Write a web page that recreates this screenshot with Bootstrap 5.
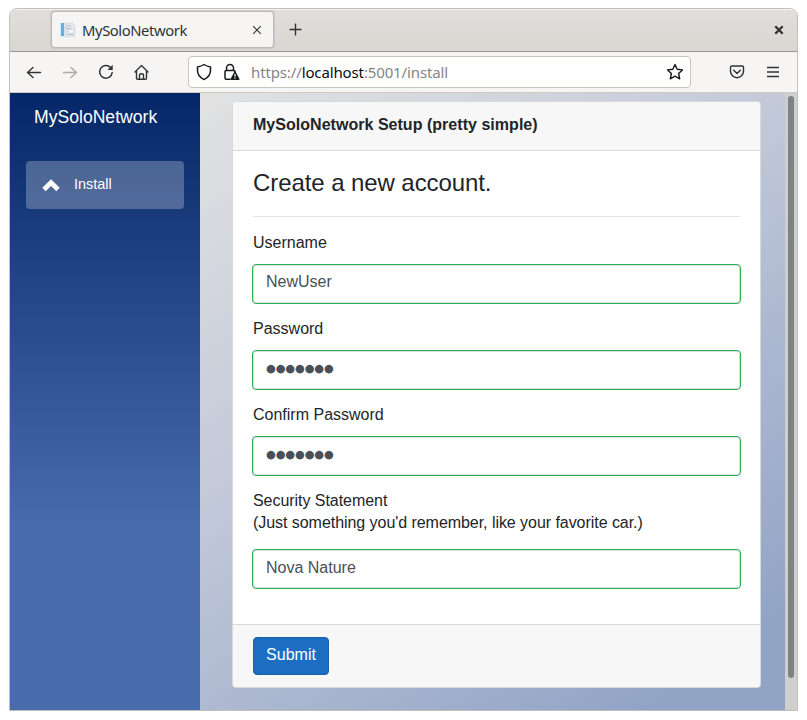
<!DOCTYPE html>
<html lang="en">
<head>
<meta charset="utf-8">
<title>MySoloNetwork</title>
<link href="https://cdn.jsdelivr.net/npm/bootstrap@5.3.0/dist/css/bootstrap.min.css" rel="stylesheet">
<style>
body{font-family:"Liberation Sans",Arial,sans-serif;color:#212529;background:#fff;height:720px;overflow:hidden;padding:8px 9px 9px}
svg{display:block;flex:none}
.win{width:789px;height:703px;border:1px solid #c2c0bd;border-radius:8px 8px 0 0;overflow:hidden}
.chrome-font{font-family:"Noto Sans",sans-serif}
.titlebar{height:43px;background:linear-gradient(#e1dedb,#dad6d2);border-bottom:1px solid #9a9590;box-shadow:inset 0 1px #f6f4f3;padding:3px 13px 4px 41px}
.tab{width:223px;height:37px;background:#f6f5f4;border:1px solid #bcb9bc;border-radius:4px;box-shadow:0 0 2px #a9a5a5;padding:0 11px 0 8px;font-size:14.8px;letter-spacing:-.42px;color:#2e3436}
.tab-name{padding:2px 0 0 6px}
.newtab{margin-left:15px}
.toolbar{height:41px;background:#f6f5f4;border-bottom:1px solid #d0c8c1;padding:0 18px 0 15px;color:#2e3436}
.home{margin-left:18px}
.urlbar{width:503px;height:32px;background:#fff;border:1px solid #cac5c0;border-radius:4px;padding:0 6px;margin-left:37px;font-size:15px;letter-spacing:-.13px;color:#858585}
.address{margin-left:9px;padding-top:1px}
.lock{margin-left:9px}
.menu-icon{margin-left:22px}
.urlbar b{font-weight:400;color:#0c0c0d}
.viewport{height:617px}
.sidebar{width:190px;background:linear-gradient(#052767,#486bab 70%)}
.brand{height:48px;padding:1px 0 0 24px;font-size:17.6px;color:#fff}
.side-link{margin:20px 16px 0;height:48px;border-radius:4px;background:rgba(255,255,255,.25);color:#fff;font-size:14.4px;padding:0 16px;gap:14px}
.page{width:585px;padding:8px 24px 0 32px;background:linear-gradient(145deg,#e2e2e2 0%,#c5cbda 37%,#92a4c6 90%)}
.setup{--bs-card-border-color:#d8d9db;--bs-card-cap-bg:#f7f7f7;--bs-card-border-radius:4px;--bs-card-inner-border-radius:3px;height:587px;width:529px}
.setup .card-header{height:49px;padding:0 20px 3px;border-color:#d8d8d8;letter-spacing:.03px}
.setup .card-body{padding:0 20px}
.setup h2{font-size:24px;line-height:28px;font-weight:400;letter-spacing:-.08px;margin:18px 0 19px}
.setup hr{margin:0 0 15px;border-color:#000;opacity:.11}
.setup label{display:block;line-height:22px;margin-bottom:10px}
.setup label.two-line{margin-bottom:15px;letter-spacing:-.05px}
.setup .form-control{width:489px;height:40px;margin:0 -1px 14px;border:1px solid #26b050;border-radius:4px;padding:6px 13px 10px;color:#495057;box-shadow:inset 0 0 0 1px #dcdfe6;font-size:16px;line-height:22px;background:#fff}
.setup .form-control.dots{font-family:"DejaVu Sans",sans-serif;font-size:11.2px;letter-spacing:-.1px;padding:6px 13px 10px}
.setup #statement{padding:7px 13px 9px}
.setup .card-footer{height:63px;padding:12px 20px;border-color:#d8d8d8}
.btn-send{--bs-btn-bg:#1b6ec2;--bs-btn-color:#fff;--bs-btn-border-color:#1861ac;--bs-btn-border-radius:4px;width:76px;height:38px;padding:4px 0 7px}
.track{width:12px;background:#cfcfcf;padding:3px 3px 0}
.thumb{width:6px;height:582px;border-radius:3px;background:#7e8382}
</style>
<script src="https://cdn.jsdelivr.net/npm/bootstrap@5.3.0/dist/js/bootstrap.bundle.min.js"></script>
</head>
<body>
<div class="win">
  <div class="titlebar chrome-font d-flex align-items-center">
    <div class="tab d-flex align-items-center">
      <svg width="16" height="16" viewBox="0 0 16 16"><path d="M0 1h5v14H0z" fill="#d6e8f2"/><path d="M1 1h3v13H1z" fill="#66aedb"/><path d="M5 1h8l2 3v11H5z" fill="#e4e8ed" stroke="#d0d5dc" stroke-width=".6"/><path d="M6 4h5M6 6.500h5M7 9.500h6M7 12.500h7" stroke="#b4bfce"/><path d="M8 8h6v3H8z" fill="#fff" stroke="#bcc8d6" stroke-width=".6"/></svg>
      <span class="tab-name">MySoloNetwork</span>
      <svg class="ms-auto" width="10" height="10" viewBox="0 0 10 10" stroke="#2e3436" stroke-width="1.100"><path d="M1.200 1.200l7.600 7.600M8.800 1.200L1.200 8.800"/></svg>
    </div>
    <svg class="newtab" width="13" height="13" viewBox="0 0 13 13" stroke="#2e3436" stroke-width="1.400"><path d="M6.500 .5v12M.5 6.500h12"/></svg>
    <svg class="ms-auto" width="10" height="10" viewBox="0 0 10 10" stroke="#2e3436" stroke-width="2.300"><path d="M1.300 1.300l7.400 7.400M8.700 1.300L1.300 8.700"/></svg>
  </div>
  <div class="toolbar chrome-font d-flex align-items-center">
    <svg width="18" height="16" viewBox="0 0 18 16" fill="none" stroke="currentColor" stroke-width="1.400" stroke-linecap="round" stroke-linejoin="round"><path d="M15.500 8.500H2.500M8 3.500l-5.500 5 5.500 5"/></svg>
    <svg class="ms-3" width="20" height="16" viewBox="0 0 20 16" fill="none" stroke="#a9aaa9" stroke-width="1.400" stroke-linecap="round" stroke-linejoin="round"><path d="M4.500 8.500h13M12 3.500l5.500 5-5.500 5"/></svg>
    <svg class="ms-3" width="20" height="16" viewBox="0 0 20 16" fill="none" stroke="currentColor" stroke-width="1.500" stroke-linecap="round"><path d="M17.200 8.500A6.300 6.300 0 1 1 15.500 3.500"/><path d="M17.700 .8v5.200h-5.200z" fill="currentColor" stroke="none"/></svg>
    <svg class="home" width="18" height="16" viewBox="0 0 18 16" fill="none" stroke="currentColor" stroke-width="1.400" stroke-linecap="round" stroke-linejoin="round"><path d="M2 8L8.500 1.500 15 8M3.500 7v7.300q0 1 1 1h8q1 0 1-1V7M6.500 15v-3.800q0-1.500 2-1.500t2 1.500V15"/></svg>
    <div class="urlbar d-flex align-items-center me-auto">
      <svg width="18" height="18" viewBox="0 0 18 18" fill="none" stroke="#17181a" stroke-width="1.500" stroke-linejoin="round"><path d="M9 1.500c2 1.400 4 2 6.500 2.400v3.400c0 4.300-2.500 7.500-6.500 9.300-4-1.800-6.500-5-6.500-9.300V3.900C5 3.500 7 2.900 9 1.500z"/></svg>
      <svg class="lock" width="20" height="18" viewBox="0 0 20 18" fill="none"><path d="M4.500 7.500V5a3.500 3.500 0 0 1 7 0v2.500M8 16.300H4.200q-1.200 0-1.200-1.200V8.700q0-1.200 1.200-1.200h7.600q1.200 0 1.200 1.200" stroke="#17181a" stroke-width="1.500" stroke-linecap="round"/><path d="M12.500 8.600q.5-.6 1 0l4 7.500q.2.900-.7.900H9.200q-.8 0-.6-.9z" fill="#17181a"/><path d="M13 11v2.700M13 14.600v1.200" stroke="#fff" stroke-width="1.200"/></svg>
      <span class="address">https://<b>localhost</b>:5001/install</span>
      <svg class="ms-auto" width="18" height="18" viewBox="0 0 18 18" fill="none" stroke="#17181a" stroke-width="1.400" stroke-linejoin="round"><path d="M9 1.500l2.200 4.800 5.300.6-3.900 3.600 1.100 5.300L9 13.200l-4.700 2.600 1.100-5.300L1.500 6.900l5.300-.6z"/></svg>
    </div>
    <svg width="16" height="16" viewBox="0 0 16 16" fill="none" stroke="currentColor" stroke-width="1.400" stroke-linecap="round" stroke-linejoin="round"><path d="M2.800 2h10.400q1.300 0 1.300 1.300v3.900a6.500 6.500 0 0 1-13 0V3.300Q1.500 2 2.800 2zM4.700 6.300L8 9.500l3.300-3.200"/></svg>
    <svg class="menu-icon" width="12" height="12" viewBox="0 0 12 12" stroke="currentColor" stroke-width="1.300"><path d="M0 1.500h12M0 6h12M0 10.500h12"/></svg>
  </div>
  <div class="viewport d-flex">
    <nav class="sidebar flex-shrink-0">
      <div class="brand d-flex align-items-center">MySoloNetwork</div>
      <a class="side-link d-flex align-items-center text-decoration-none" href="#">
        <svg width="18" height="13" viewBox="0 0 18 13"><path d="M9 .2L17.700 8.700 14.300 12.200 9 7l-5.300 5.200L.3 8.700z" fill="#fff"/></svg>
        <span class="side-text">Install</span>
      </a>
    </nav>
    <main class="page flex-shrink-0">
      <div class="card setup">
        <div class="card-header d-flex align-items-center fw-bold">MySoloNetwork Setup (pretty simple)</div>
        <div class="card-body">
          <h2>Create a new account.</h2>
          <hr>
          <label for="user">Username</label>
          <input class="form-control" id="user" value="NewUser">
          <label for="pass">Password</label>
          <input class="form-control dots" id="pass" value="●●●●●●●">
          <label for="confirm">Confirm Password</label>
          <input class="form-control dots" id="confirm" value="●●●●●●●">
          <label class="two-line" for="statement">Security Statement<br>(Just something you'd remember, like your favorite car.)</label>
          <input class="form-control" id="statement" value="Nova Nature">
        </div>
        <div class="card-footer"><button class="btn btn-send" type="button">Submit</button></div>
      </div>
    </main>
    <div class="track flex-shrink-0"><div class="thumb"></div></div>
  </div>
</div>
</body>
</html>
